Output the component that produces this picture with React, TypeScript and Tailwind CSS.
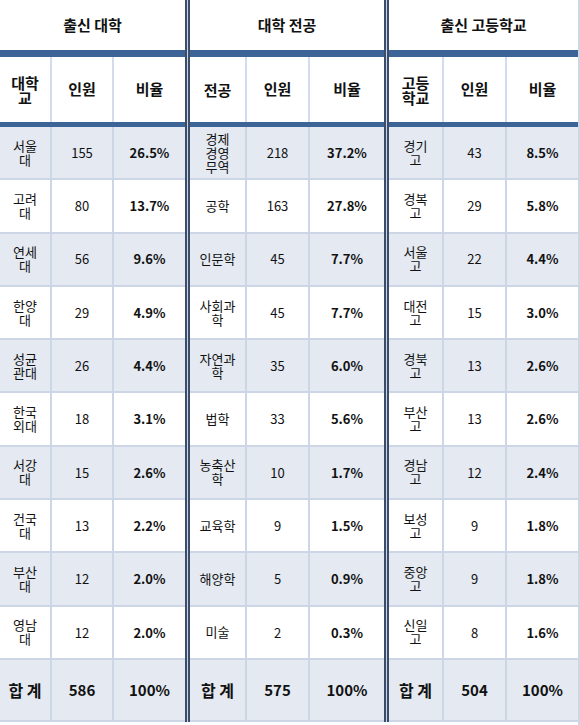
type Row = [string, string, string];

type Group = {
  title: string;
  head: string;
  cols: string; // grid template
  rows: Row[];
  total: [string, string];
};

const groups: Group[] = [
  {
    title: "출신 대학",
    head: "대학\n교",
    cols: "grid-cols-[52px_62px_1fr]",
    rows: [
      ["서울\n대", "155", "26.5%"],
      ["고려\n대", "80", "13.7%"],
      ["연세\n대", "56", "9.6%"],
      ["한양\n대", "29", "4.9%"],
      ["성균\n관대", "26", "4.4%"],
      ["한국\n외대", "18", "3.1%"],
      ["서강\n대", "15", "2.6%"],
      ["건국\n대", "13", "2.2%"],
      ["부산\n대", "12", "2.0%"],
      ["영남\n대", "12", "2.0%"],
    ],
    total: ["586", "100%"],
  },
  {
    title: "대학 전공",
    head: "전공",
    cols: "grid-cols-[57px_63px_1fr]",
    rows: [
      ["경제\n경영\n무역", "218", "37.2%"],
      ["공학", "163", "27.8%"],
      ["인문학", "45", "7.7%"],
      ["사회과\n학", "45", "7.7%"],
      ["자연과\n학", "35", "6.0%"],
      ["법학", "33", "5.6%"],
      ["농축산\n학", "10", "1.7%"],
      ["교육학", "9", "1.5%"],
      ["해양학", "5", "0.9%"],
      ["미술", "2", "0.3%"],
    ],
    total: ["575", "100%"],
  },
  {
    title: "출신 고등학교",
    head: "고등\n학교",
    cols: "grid-cols-[55px_63px_1fr]",
    rows: [
      ["경기\n고", "43", "8.5%"],
      ["경복\n고", "29", "5.8%"],
      ["서울\n고", "22", "4.4%"],
      ["대전\n고", "15", "3.0%"],
      ["경북\n고", "13", "2.6%"],
      ["부산\n고", "13", "2.6%"],
      ["경남\n고", "12", "2.4%"],
      ["보성\n고", "9", "1.8%"],
      ["중앙\n고", "9", "1.8%"],
      ["신일\n고", "8", "1.6%"],
    ],
    total: ["504", "100%"],
  },
];

const font = "font-['Noto_Sans_CJK_KR','Liberation_Sans',sans-serif]";

function Divider() {
  return (
    <div className="flex h-[722px] w-[5px] shrink-0">
      <div className="w-[2px] bg-[#3b4d68]" />
      <div className="w-[1px] bg-[#c9d5e6]" />
      <div className="w-[2px] bg-[#3b4d68]" />
    </div>
  );
}

function GroupTable({ g, width }: { g: Group; width: string }) {
  return (
    <div className={`flex shrink-0 flex-col ${width}`}>
      <div className="flex h-[50px] items-center justify-center text-[15px] font-bold text-[#111]">
        {g.title}
      </div>
      <div className="h-[7px] bg-[#3c6496]" />
      <div className={`grid h-[65px] ${g.cols} text-[15px] font-bold text-[#111]`}>
        <div className="flex items-center justify-center whitespace-pre-line border-r-2 border-[#d3dceb] text-center leading-[15px]">
          {g.head}
        </div>
        <div className="flex items-center justify-center border-r-2 border-[#d3dceb]">인원</div>
        <div className="flex items-center justify-center">비율</div>
      </div>
      <div className="h-[5px] bg-[#3c6496]" />
      {g.rows.map((r, i) => (
        <div
          key={i}
          className={`grid h-[53.3px] ${g.cols} border-b-2 border-[#cdd6e5] text-[#111] ${
            i % 2 === 0 ? "bg-[#e4e9f2]" : "bg-white"
          }`}
        >
          <div className="flex items-center justify-center whitespace-pre-line border-r-2 border-[#cdd6e5] text-center text-[13px] leading-[14px]">
            {r[0]}
          </div>
          <div className="flex items-center justify-center border-r-2 border-[#cdd6e5] text-[13px]">
            {r[1]}
          </div>
          <div className="flex items-center justify-center text-[13px] font-bold">{r[2]}</div>
        </div>
      ))}
      <div className={`grid h-[62px] ${g.cols} border-b-2 border-[#cdd6e5] bg-[#e4e9f2] text-[16px] font-bold text-[#111]`}>
        <div className="flex items-center justify-center border-r-2 border-[#cdd6e5]">합 계</div>
        <div className="flex items-center justify-center border-r-2 border-[#cdd6e5] text-[15px]">
          {g.total[0]}
        </div>
        <div className="flex items-center justify-center text-[15px]">{g.total[1]}</div>
      </div>
    </div>
  );
}

export default function App() {
  return (
    <div className={`flex h-[725px] w-[580px] overflow-hidden bg-white ${font}`}>
      <GroupTable g={groups[0]} width="w-[185px]" />
      <Divider />
      <GroupTable g={groups[1]} width="w-[194px]" />
      <Divider />
      <div className="border-r-2 border-[#cdd6e5]">
        <GroupTable g={groups[2]} width="w-[189px]" />
      </div>
    </div>
  );
}
